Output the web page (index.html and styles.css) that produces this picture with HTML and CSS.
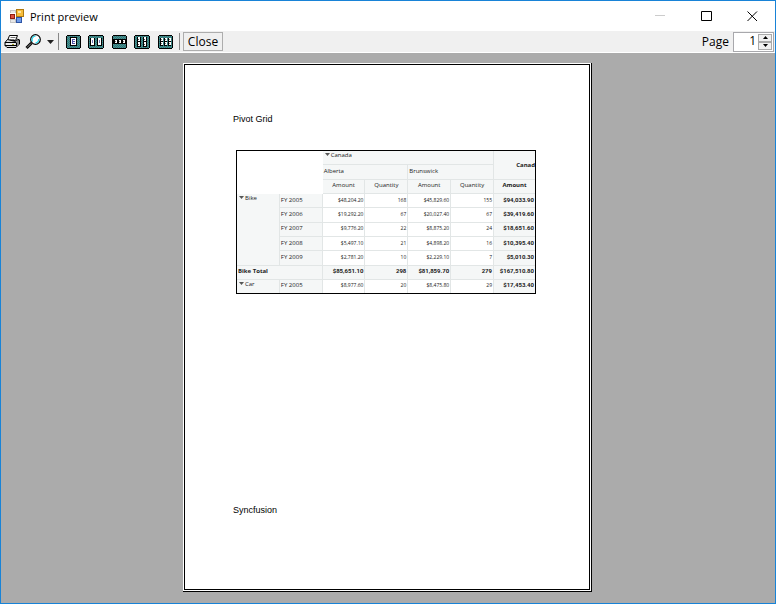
FILE: index.html
```html
<!DOCTYPE html>
<html lang="en">
<head>
<meta charset="utf-8">
<title>Print preview</title>
<link rel="stylesheet" href="styles.css">
</head>
<body>
<div class="window">
  <header class="titlebar">
    <svg class="app-icon" width="15" height="15" viewBox="0 0 15 15" shape-rendering="crispEdges">
      <path fill="#c4c4c4" d="M0 1h6v3H0zM0 10h6v4H0z"/>
      <path fill="#e8e8e8" d="M1 2h4v2H1zM1 11h4v2H1z"/>
      <path fill="#8f1d10" d="M0 5h5v5H0z"/><path fill="#dd5040" d="M1 6h3v3H1z"/>
      <path fill="#b07a10" d="M6 0h8v8H6z"/><path fill="#f7bd3a" d="M7 1h6v6H7z"/><path fill="#ffe6a0" d="M8 2h3v2H8z"/>
      <path fill="#2e55a5" d="M6 8h6v6H6z"/><path fill="#6f9be8" d="M7 9h4v4H7z"/>
    </svg>
    <h1 class="title">Print preview</h1>
    <div class="caption">
      <button class="cap" aria-label="Minimize"><svg width="11" height="11" viewBox="0 0 11 11" shape-rendering="crispEdges"><path fill="#ccc" d="M0 4h10v1H0z"/></svg></button>
      <button class="cap" aria-label="Maximize"><svg width="11" height="11" viewBox="0 0 11 11"><path fill="none" stroke="#000" d="M.5.5h10v9H.5z"/></svg></button>
      <button class="cap" aria-label="Close window"><svg width="11" height="11" viewBox="0 0 11 11"><path stroke="#000" d="M.5.5l9.500 9.500M10 .5L.5 10"/></svg></button>
    </div>
  </header>

  <div class="toolbar">
    <button class="tool print" aria-label="Print">
      <svg width="17" height="15" viewBox="0 0 17 15">
        <path fill="#fff" stroke="#000" d="M5.5 1.5h8l-2 5h-8z"/>
        <path stroke="#777" d="M6.5 3.500h5M5.500 5.500h5"/>
        <path fill="#ddd" stroke="#000" d="M3.500 5.500L1 8.500v3l2 2h9l3.500-3.500v-4l-2-1-2 2.500z"/>
        <path fill="#888" d="M12 9l3-3v4l-3 3z"/>
        <path stroke="#000" d="M1 8.500h11M1 11.500h11M12.500 8.500v4M13 7.500l2-2"/>
        <path stroke="#fff" d="M2 10h9"/><path stroke="#a8a820" d="M8 10.500h2"/>
      </svg>
    </button>
    <button class="tool zoom" aria-label="Zoom">
      <svg width="17" height="16" viewBox="0 0 17 16">
        <path stroke="#000" stroke-width="3" d="M1.500 14l5-5"/>
        <path stroke="#999" d="M2 13.500l4-4"/>
        <circle cx="10.500" cy="5.500" r="4.800" fill="#fff" stroke="#000" stroke-width="1.200"/>
        <path fill="none" stroke="#25d8ed" stroke-width="1.300" d="M7.500 7.500A3.500 3.500 0 0 1 10.500 2.200M13.700 5A3.500 3.500 0 0 1 10.500 9"/>
      </svg>
      <svg class="arrow" width="7" height="4" viewBox="0 0 7 4"><path fill="#222" d="M0 0h7L3.500 4z"/></svg>
    </button>
    <span class="sep"></span>
    <button class="tool view" aria-label="One page">
      <svg width="15" height="14" viewBox="0 0 15 14" shape-rendering="crispEdges"><use href="#screen"/><path fill="#000" d="M4 2h7v9H4z"/><path fill="#fff" d="M5 3h5v7H5z"/><path fill="#5353a8" d="M6 4h3v1H7v1h2v1H7v1h2v1H6z"/></svg>
    </button>
    <button class="tool view wide" aria-label="Two pages">
      <svg width="16" height="14" viewBox="0 0 16 14" shape-rendering="crispEdges"><use href="#screen-wide"/><path fill="#000" d="M2 3h5v8H2zM9 3h5v8H9z"/><path fill="#fff" d="M3 3h3v7H3zM10 3h3v7h-3z"/><path fill="#7777b8" d="M4 5h1v3H4zM11 5h1v3h-1z"/></svg>
    </button>
    <button class="tool view" aria-label="Three pages">
      <svg width="15" height="14" viewBox="0 0 15 14" shape-rendering="crispEdges"><use href="#screen"/><path fill="#000" d="M1 4h13v5H1z"/><path fill="#fff" d="M3 5h2v3H3zM7 5h2v3H7zM11 5h2v3h-2z"/><path fill="#777" d="M3 6h1v1H3zM7 6h1v1H7zM11 6h1v1h-1z"/></svg>
    </button>
    <button class="tool view wide" aria-label="Four pages">
      <svg width="16" height="14" viewBox="0 0 16 14" shape-rendering="crispEdges"><use href="#screen-wide"/><path fill="#000" d="M3 2h4v10H3zM9 2h4v10H9z"/><path fill="#fff" d="M4 2h2v4H4zM10 2h2v4h-2zM4 7h2v4H4zM10 7h2v4h-2z"/><path fill="#555" d="M4 4h1v1H4zM10 4h1v1h-1zM4 9h1v1H4zM10 9h1v1h-1z"/></svg>
    </button>
    <button class="tool view" aria-label="Six pages">
      <svg width="15" height="14" viewBox="0 0 15 14" shape-rendering="crispEdges"><use href="#screen"/><path fill="#000" d="M2 3h3v8H2zM6 3h3v8H6zM10 3h3v8h-3z"/><path fill="#fff" d="M3 3h2v3H3zM7 3h2v3H7zM11 3h2v3h-2zM3 7h2v3H3zM7 7h2v3H7zM11 7h2v3h-2z"/><path fill="#777" d="M3 4h1v1H3zM7 4h1v1H7zM11 4h1v1h-1zM3 8h1v1H3zM7 8h1v1H7zM11 8h1v1h-1z"/></svg>
    </button>
    <span class="sep second"></span>
    <button class="close">Close</button>
    <label class="page-label" for="page">Page</label>
    <div class="spinner">
      <input id="page" type="text" value="1">
      <div class="steps">
        <button aria-label="Next page"><svg width="5" height="3" viewBox="0 0 5 3"><path d="M2.500 0L5 3H0z"/></svg></button>
        <button aria-label="Previous page"><svg width="5" height="3" viewBox="0 0 5 3"><path d="M0 0h5L2.500 3z"/></svg></button>
      </div>
    </div>
  </div>

  <main class="preview">
    <div class="paper">
      <div class="sheet">
        <div class="running">Pivot Grid</div>
        <div class="grid">
          <table>
            <colgroup><col><col><col><col><col><col><col class="last"></colgroup>
            <tr><td class="blank" colspan="2" rowspan="3"></td><th class="exp" colspan="4"><svg width="5" height="3" viewBox="0 0 5 3"><path d="M0 0h5L2.500 3z"/></svg>Canada</th><th class="num bold" rowspan="2">Canad</th></tr>
            <tr><th colspan="2">Alberta</th><th colspan="2">Brunswick</th></tr>
            <tr class="heads"><th>Amount</th><th>Quantity</th><th>Amount</th><th>Quantity</th><th class="bold">Amount</th></tr>
            <tr><th class="exp" rowspan="5"><svg width="5" height="3" viewBox="0 0 5 3"><path d="M0 0h5L2.500 3z"/></svg>Bike</th><th>FY 2005</th><td>$48,204.20</td><td>168</td><td>$45,829.60</td><td>155</td><td class="sum">$94,033.90</td></tr>
            <tr><th>FY 2006</th><td>$19,292.20</td><td>67</td><td>$20,027.40</td><td>67</td><td class="sum">$39,419.60</td></tr>
            <tr><th>FY 2007</th><td>$9,776.20</td><td>22</td><td>$8,875.20</td><td>24</td><td class="sum">$18,651.60</td></tr>
            <tr><th>FY 2008</th><td>$5,497.10</td><td>21</td><td>$4,898.20</td><td>16</td><td class="sum">$10,395.40</td></tr>
            <tr><th>FY 2009</th><td>$2,781.20</td><td>10</td><td>$2,229.10</td><td>7</td><td class="sum">$5,010.30</td></tr>
            <tr class="total"><th class="bold" colspan="2">Bike Total</th><td class="sum">$85,651.10</td><td class="sum">298</td><td class="sum">$81,859.70</td><td class="sum">279</td><td class="sum">$167,510.80</td></tr>
            <tr><th class="exp"><svg width="5" height="3" viewBox="0 0 5 3"><path d="M0 0h5L2.500 3z"/></svg>Car</th><th>FY 2005</th><td>$8,977.60</td><td>20</td><td>$8,475.80</td><td>29</td><td class="sum">$17,453.40</td></tr>
          </table>
        </div>
        <div class="running foot">Syncfusion</div>
      </div>
    </div>
  </main>
</div>
<svg class="defs" width="0" height="0" aria-hidden="true">
  <defs>
    <pattern id="teal" width="2" height="2" patternUnits="userSpaceOnUse"><path fill="#1f8080" d="M0 0h2v2H0z"/><path fill="#5c8888" d="M0 0h1v1H0zM1 1h1v1H1z"/></pattern>
    <g id="screen"><path fill="#000" d="M1 0h13v1h1v12h-1v1H1v-1H0V1h1z"/><path fill="url(#teal)" d="M1 1h13v12H1z"/></g>
    <g id="screen-wide"><path fill="#000" d="M1 0h14v1h1v12h-1v1H1v-1H0V1h1z"/><path fill="url(#teal)" d="M1 1h14v12H1z"/></g>
  </defs>
</svg>
</body>
</html>
```
FILE: styles.css
```css
* { box-sizing: border-box; }
body { margin: 0; font-family: "Open Sans", "Noto Sans", sans-serif; font-size: 12px; color: #000; }
button { font: inherit; color: inherit; padding: 0; border: 0; background: none; }
svg { display: block; flex: none; }
.defs { position: absolute; }
.window { height: 100vh; display: flex; flex-direction: column; border: 1px solid #1883d7; background: #fff; }

.titlebar { height: 30px; flex: none; display: flex; align-items: center; padding-left: 9px; }
.title { margin: 0 0 0 5px; font-size: 11px; font-weight: 400; }
.caption { margin-left: auto; display: flex; align-self: stretch; }
.cap { width: 46px; display: grid; place-items: center; }

.toolbar { height: 22px; flex: none; display: flex; align-items: center; background: #f0f0f0; border-bottom: 1px solid #fff; padding: 0 1px 0 3px; }
.tool { display: flex; align-items: center; }
.zoom { margin: 0 4px 0 4px; }
.arrow { margin-left: 5px; }
.view { margin-right: 7px; }
.wide { margin-right: 8px; }
.sep { width: 1px; height: 17px; background: #888; margin-right: 7px; }
.second { margin: 0 3px 0 -1px; }
.close { width: 40px; height: 19px; line-height: 17px; border: 1px solid #adadad; background: #f0f0f0; }
.page-label { margin-left: auto; margin-right: 4px; }
.spinner { width: 41px; height: 20px; display: flex; border: 1px solid #a8a8ac; background: #fff; }
.spinner input { flex: 1; min-width: 0; border: 0; outline: 0; padding: 0 2px 3px 0; background: none; font: inherit; text-align: right; }
.steps { width: 15px; display: flex; flex-direction: column; padding: 1px 1px 1px 0; }
.steps button { flex: 1; display: grid; place-items: center; border: 1px solid #aaa; background: #f0f0f0; }

.preview { flex: 1; min-height: 0; display: flex; justify-content: center; padding: 10px 1px 11px 0; background: #ababab; }
.paper { height: 100%; aspect-ratio: 409 / 529; padding: 1px; background: #fff; border: solid #000; border-width: 0 1px 1px 0; }
.sheet { height: 100%; display: flex; flex-direction: column; border: 1px solid #000; padding: 48px 53px 73px 48px; }
.running { font: 9px/12px "Liberation Sans", Arial, sans-serif; }
.foot { margin-top: auto; }

.grid { margin: 25px 0 0 3px; border: 1px solid #000; overflow: hidden; }
table { width: 100%; height: 142px; table-layout: fixed; border-collapse: separate; border-spacing: 0; color: #222; line-height: 8px; }
.last { width: 41px; }
th, td { padding: 0 1px 2px 0; overflow: hidden; white-space: nowrap; border: solid #e2e6e6; border-width: 0 1px 1px 0; }
th { font-size: 6px; font-weight: 400; text-align: left; background: #f5f7f7; padding-left: 1px; }
td { font-size: 5px; text-align: right; }
.blank { border: 0; }
.heads th { text-align: center; }
.exp { vertical-align: top; }
.exp svg { display: inline-block; vertical-align: 1px; margin: 0 1px 0 1px; fill: #555; }
.bold { font-weight: 700; }
th.num { text-align: right; padding: 0; }
.sum { font: 700 6px/8px Roboto, sans-serif; background: #f5f7f7; }
tr > :last-child { border-right: 0; }
tr:nth-child(2) > :last-child { border-right: 1px solid #e2e6e6; }
tr:last-child > * { border-bottom: 0; }
```
